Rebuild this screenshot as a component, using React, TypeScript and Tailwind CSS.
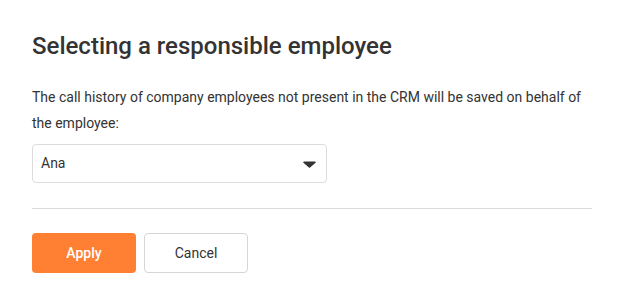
import { useState } from 'react'

export default function App() {
  const [value] = useState('Ana')

  return (
    <div className="h-[305px] w-[624px] bg-white px-8 pt-[31px] font-['Roboto',sans-serif] text-[#333]">
      <h1 className="text-[24px] leading-[30px] font-medium">Selecting a responsible employee</h1>

      <p className="mt-[23px] text-[14px] leading-[26px]">
        The call history of company employees not present in the CRM will be saved on behalf of the employee:
      </p>

      {/* employee select */}
      <div className="mt-2 flex h-[39px] w-[295px] items-center justify-between rounded border border-[#dcdcdc] bg-white pr-[10px] pl-2">
        <span className="text-[14px]">{value}</span>
        <svg width="13" height="7" viewBox="0 0 13 7" className="mt-px">
          <path d="M1 0.5h11a0.8 0.8 0 0 1 0.6 1.3L7.1 6.4a0.8 0.8 0 0 1-1.2 0L0.4 1.8A0.8 0.8 0 0 1 1 0.5z" fill="#333" />
        </svg>
      </div>

      <div className="mt-[25px] h-px w-full bg-[#dcdcdc]" />

      <div className="mt-6 flex gap-2">
        <button className="h-10 w-[104px] rounded bg-[#ff7f33] text-[14px] font-medium text-white">Apply</button>
        <button className="h-10 w-[104px] rounded border border-[#d6d6d6] bg-white text-[14px] text-[#333]">
          Cancel
        </button>
      </div>
    </div>
  )
}
